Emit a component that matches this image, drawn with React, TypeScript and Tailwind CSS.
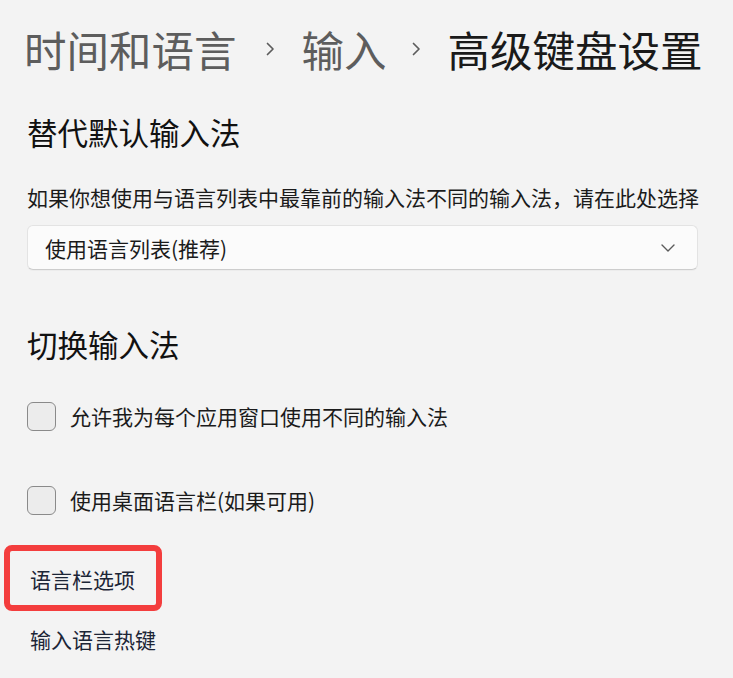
import React from "react";

const font = { fontFamily: '"Noto Sans CJK SC", "Noto Sans", sans-serif' };

function Crumb() {
  return (
    <svg width="10" height="14" viewBox="0 0 10 14" className="shrink-0">
      <path d="M2.5 1.5 L8 7 L2.5 12.5" fill="none" stroke="#5c5c5c" strokeWidth="1.7" strokeLinecap="round" strokeLinejoin="round" />
    </svg>
  );
}

function Checkbox({ label }: { label: string }) {
  return (
    <div className="flex h-[40px] items-center">
      <div className="h-[29px] w-[29px] shrink-0 rounded-[6px] border-[1.5px] border-[#8a8a8a] bg-[#ececec]" />
      <span className="ml-[14px] text-[21px] leading-[30px] text-[#1b1b1b]">{label}</span>
    </div>
  );
}

export default function App() {
  return (
    <div className="min-h-[678px] w-[733px] overflow-hidden bg-[#f3f3f3]" style={font}>
      <div className="mt-[21px] flex h-[56px] items-center pl-[24px] text-[42.5px] leading-[56px] whitespace-nowrap">
        <span className="text-[#5d5d5d]">时间和语言</span>
        <span className="ml-[28px] mr-[27px] flex items-center"><Crumb /></span>
        <span className="text-[#5d5d5d]">输入</span>
        <span className="ml-[24px] mr-[27px] flex items-center"><Crumb /></span>
        <span className="text-[#1a1a1a]">高级键盘设置</span>
      </div>

      <div className="px-[27px]">
        <div className="mt-[35px] text-[30.5px] font-normal leading-[40px] text-[#111111]">替代默认输入法</div>
        <div className="mt-[30px] text-[21px] leading-[30px] whitespace-nowrap text-[#1b1b1b]">
          如果你想使用与语言列表中最靠前的输入法不同的输入法，请在此处选择
        </div>
        <div className="mt-[13px] flex h-[45px] w-[671px] items-center justify-between rounded-[6px] border border-[#e3e3e3] border-b-[#cdcdcd] bg-[#fbfbfb] pl-[17px] pr-[22px] shadow-[0_1px_1px_rgba(0,0,0,0.03)]">
          <span className="text-[21px] leading-[30px] text-[#1b1b1b]">使用语言列表(推荐)</span>
          <svg width="14" height="8" viewBox="0 0 14 8">
            <path d="M1 1 L7 7 L13 1" fill="none" stroke="#5a5a5a" strokeWidth="1.4" strokeLinecap="round" strokeLinejoin="round" />
          </svg>
        </div>

        <div className="mt-[54px] text-[30.5px] font-normal leading-[40px] text-[#111111]">切换输入法</div>

        <div className="mt-[32px]">
          <Checkbox label="允许我为每个应用窗口使用不同的输入法" />
        </div>
        <div className="mt-[44px]">
          <Checkbox label="使用桌面语言栏(如果可用)" />
        </div>

        <div className="relative mt-[44px]">
          <div className="pl-[3px] text-[21px] leading-[30px] text-[#1c2536]">语言栏选项</div>
          <div className="pointer-events-none absolute left-[-23px] top-[-19px] h-[66px] w-[158px] rounded-[8px] border-[6px] border-[#f33d3d]" />
        </div>
        <div className="mt-[30px] pl-[3px] text-[21px] leading-[30px] text-[#1c2536]">输入语言热键</div>
      </div>
    </div>
  );
}
